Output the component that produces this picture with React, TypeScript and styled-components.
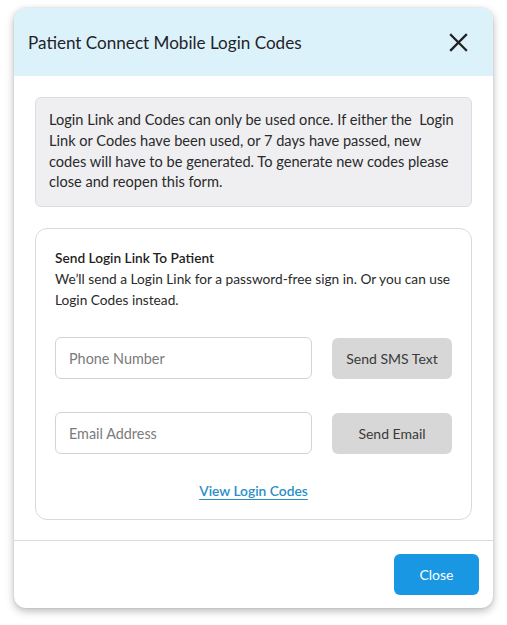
import React from "react";
import styled, { createGlobalStyle } from "styled-components";

const Global = createGlobalStyle`
  html, body { margin: 0; padding: 0; background: #ffffff; }
  body { font-family: Lato, "Open Sans", sans-serif; color: #222; }
  * { box-sizing: border-box; }
`;

const Page = styled.div`
  width: 507px;
  height: 625px;
  padding: 8px 14px 0 14px;
`;

const Modal = styled.div`
  width: 479px;
  background: #fff;
  border-radius: 12px;
  box-shadow: 0 3px 8px rgba(0, 0, 0, 0.28), 0 0 2px rgba(0, 0, 0, 0.12);
  overflow: hidden;
`;

const Header = styled.div`
  height: 68px;
  background: #dcf2fb;
  display: flex;
  align-items: center;
  justify-content: space-between;
  padding: 0 24px 0 14px;
`;

const Title = styled.h1`
  margin: 0;
  font-size: 17.1px;
  font-weight: 400;
  color: #1f2328;
`;

const CloseX = styled.button`
  border: 0;
  background: transparent;
  padding: 0;
  width: 22px;
  height: 22px;
  display: flex;
  align-items: center;
  justify-content: center;
  cursor: pointer;
`;

const Body = styled.div`
  padding: 21px 21px 20px 21px;
  display: flex;
  flex-direction: column;
  gap: 21px;
`;

const Notice = styled.div`
  background: #efeff2;
  border: 1px solid #dcdce0;
  border-radius: 6px;
  padding: 12px 13px 13px 13px;
  font-size: 14.6px;
  line-height: 20.8px;
  color: #2a2a2a;
`;

const Card = styled.div`
  border: 1px solid #d9d9d9;
  border-radius: 12px;
  padding: 18px 19px 20px 19px;
`;

const CardTitle = styled.div`
  font-size: 13.7px;
  font-weight: 600;
  line-height: 21px;
  color: #1f1f1f;
`;

const CardText = styled.div`
  font-size: 13.7px;
  line-height: 21px;
  color: #2a2a2a;
`;

const Rows = styled.div`
  margin-top: 27px;
  display: flex;
  flex-direction: column;
  gap: 33px;
`;

const Row = styled.div`
  display: flex;
  align-items: center;
  gap: 20px;
`;

const Input = styled.input`
  width: 257px;
  height: 42px;
  border: 1px solid #d3d3d3;
  border-radius: 6px;
  padding: 0 13px;
  font-family: Lato, sans-serif;
  font-size: 14.4px;
  color: #333;
  outline: none;
  &::placeholder { color: #7b7b7b; }
`;

const GrayButton = styled.button`
  width: 120px;
  height: 41px;
  border: 0;
  border-radius: 6px;
  background: #d7d7d7;
  font-family: Lato, sans-serif;
  font-size: 14px;
  color: #3a3a3a;
`;

const LinkRow = styled.div`
  display: flex;
  justify-content: center;
  margin-top: 28px;
`;

const Link = styled.a`
  font-size: 13.8px;
  font-weight: 600;
  color: #2a8fc8;
  text-decoration: underline;
  text-underline-offset: 3px;
  text-decoration-thickness: 1px;
  cursor: pointer;
`;

const Footer = styled.div`
  border-top: 1px solid #dcdcdc;
  height: 68px;
  display: flex;
  align-items: center;
  justify-content: flex-end;
  padding: 0 14px;
`;

const PrimaryButton = styled.button`
  width: 85px;
  height: 41px;
  border: 0;
  border-radius: 6px;
  background: #1997e3;
  color: #fff;
  font-family: Lato, sans-serif;
  font-size: 14px;
`;

export default function App() {
  return (
    <Page>
      <Global />
      <Modal>
        <Header>
          <Title>Patient Connect Mobile Login Codes</Title>
          <CloseX aria-label="Close">
            <svg width="19" height="19" viewBox="0 0 19 19">
              <path d="M2 2 L17 17 M17 2 L2 17" stroke="#222" strokeWidth="2.3" strokeLinecap="square" />
            </svg>
          </CloseX>
        </Header>
        <Body>
          <Notice>
            Login Link and Codes can only be used once. If either the&nbsp; Login Link or Codes have been used, or 7 days have passed, new codes will have to be generated. To generate new codes please close and reopen this form.
          </Notice>
          <Card>
            <CardTitle>Send Login Link To Patient</CardTitle>
            <CardText>We’ll send a Login Link for a password-free sign in. Or you can use Login Codes instead.</CardText>
            <Rows>
              <Row>
                <Input placeholder="Phone Number" />
                <GrayButton>Send SMS Text</GrayButton>
              </Row>
              <Row>
                <Input placeholder="Email Address" />
                <GrayButton>Send Email</GrayButton>
              </Row>
            </Rows>
            <LinkRow>
              <Link>View Login Codes</Link>
            </LinkRow>
          </Card>
        </Body>
        <Footer>
          <PrimaryButton>Close</PrimaryButton>
        </Footer>
      </Modal>
    </Page>
  );
}
